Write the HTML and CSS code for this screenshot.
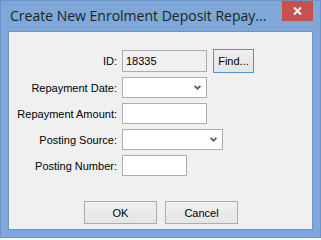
FILE: index.html
```html
<!DOCTYPE html>
<html>
<head>
<meta charset="utf-8">
<link rel="stylesheet" href="styles.css">
</head>
<body>
<div class="window">
  <div class="titlebar">
    <span class="title">Create New Enrolment Deposit Repay...</span>
    <div class="close">
      <svg width="9" height="8" viewBox="0 0 9 8"><path d="M1 0.5 L8 7.5 M8 0.5 L1 7.5" stroke="#fff" stroke-width="2" fill="none"/></svg>
    </div>
  </div>
  <div class="client">
    <div class="form">
      <label class="lbl">ID:</label>
      <div class="cell">
        <div class="field readonly w85">18335</div>
        <div class="btn find">Find...</div>
      </div>
      <label class="lbl">Repayment Date:</label>
      <div class="cell">
        <div class="field combo w85">
          <svg class="chev" width="7" height="5" viewBox="0 0 7 5"><path d="M0.6 0.8 L3.5 3.7 L6.4 0.8" stroke="#5a5a5a" stroke-width="1.7" fill="none"/></svg>
        </div>
      </div>
      <label class="lbl">Repayment Amount:</label>
      <div class="cell"><div class="field w85"></div></div>
      <label class="lbl">Posting Source:</label>
      <div class="cell">
        <div class="field combo w101">
          <svg class="chev" width="7" height="5" viewBox="0 0 7 5"><path d="M0.6 0.8 L3.5 3.7 L6.4 0.8" stroke="#5a5a5a" stroke-width="1.7" fill="none"/></svg>
        </div>
      </div>
      <label class="lbl">Posting Number:</label>
      <div class="cell"><div class="field w65"></div></div>
    </div>
    <div class="actions">
      <div class="btn action">OK</div>
      <div class="btn action">Cancel</div>
    </div>
  </div>
</div>
</body>
</html>
```

FILE: styles.css
```css
html, body {
  margin: 0;
  padding: 0;
}
body {
  width: 321px;
  height: 238px;
  overflow: hidden;
}
.window {
  box-sizing: border-box;
  width: 321px;
  height: 238px;
  border: 1px solid #6b93c6;
  background: #7fa7d8;
  padding: 0 7px 7px 7px;
  display: flex;
  flex-direction: column;
}
.titlebar {
  height: 30px;
  display: flex;
  align-items: flex-start;
  justify-content: space-between;
}
.title {
  font-family: "Open Sans", "Liberation Sans", sans-serif;
  font-size: 14px;
  line-height: 19px;
  color: #1e1e1e;
  padding-top: 5px;
  margin-left: 2px;
  white-space: nowrap;
}
.close {
  width: 31px;
  height: 20px;
  background: #c75050;
  display: flex;
  align-items: center;
  justify-content: center;
}
.close svg {
  display: block;
}
.client {
  flex: 1;
  background: #f0f0f0;
  border: 1px solid #6f93c4;
  display: flex;
  flex-direction: column;
  padding: 18px 0 5px 0;
  font-family: "Liberation Sans", Arial, sans-serif;
  font-size: 11px;
  color: #000;
}
.form {
  display: grid;
  grid-template-columns: 108px auto;
  grid-template-rows: 22px 21px 21px 21px 21px;
  column-gap: 5px;
  row-gap: 5px;
}
.lbl {
  text-align: right;
  align-self: center;
  white-space: nowrap;
}
.cell {
  display: flex;
  align-items: stretch;
}
.field {
  box-sizing: border-box;
  height: 100%;
  border: 1px solid #abadb3;
  background: #fff;
  display: flex;
  align-items: center;
  padding-left: 3px;
}
.field.readonly {
  background: #f0f0f0;
  border-color: #adadad;
}
.combo {
  justify-content: flex-end;
  padding-right: 5px;
}
.chev {
  display: block;
}
.w85 { width: 85px; }
.w101 { width: 101px; }
.w65 { width: 65px; }
.btn {
  box-sizing: border-box;
  border: 1px solid #acacac;
  background: linear-gradient(#f0f0f0, #e5e5e5);
  display: flex;
  align-items: center;
  justify-content: center;
  white-space: nowrap;
}
.find {
  width: 41px;
  height: 24px;
  margin: -1px 0 0 6px;
  border-color: #4f94d8;
}
.actions {
  margin-top: auto;
  display: flex;
  justify-content: center;
  gap: 8px;
  padding-left: 1px;
}
.action {
  width: 73px;
  height: 23px;
}
```
